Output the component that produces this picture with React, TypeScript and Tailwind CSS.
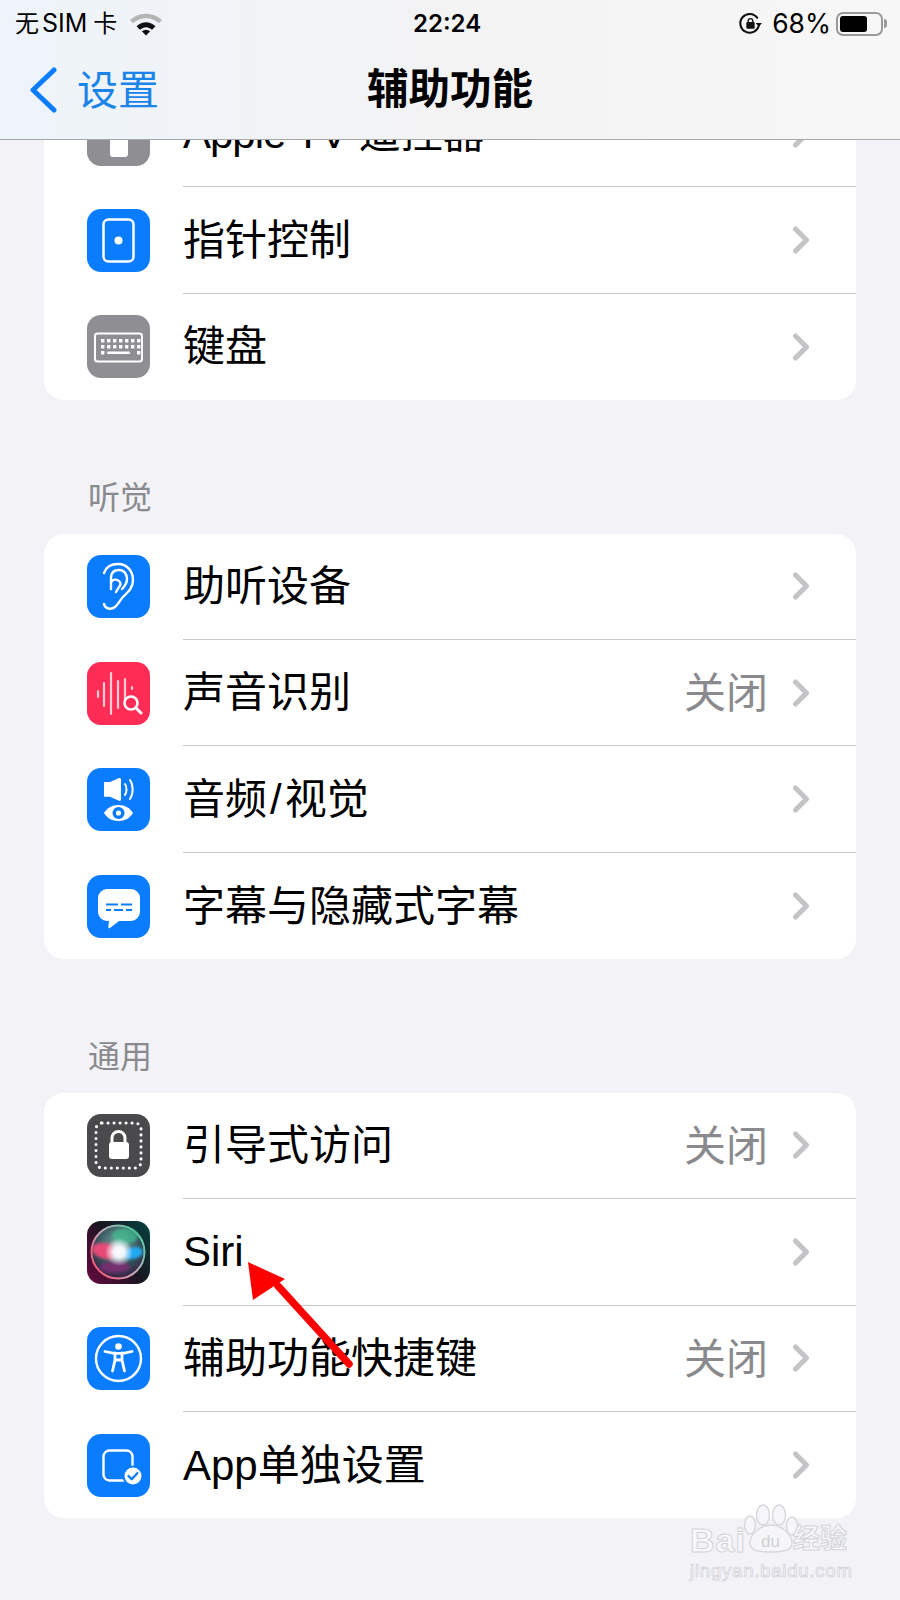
import React from "react";
import { ChevronRight } from "lucide-react";

type RowProps = {
  icon: React.ReactNode;
  bg?: string;
  label: React.ReactNode;
  value?: string;
  last?: boolean;
};

const Row = ({ icon, bg, label, value, last }: RowProps) => (
  <div className="flex h-[106.4px] items-center">
    <div className={`ml-[43px] h-[63px] w-[63px] shrink-0 overflow-hidden rounded-[14px] ${bg ?? ""}`}>
      {icon}
    </div>
    <div className={`ml-[33px] flex h-full flex-1 items-center pr-[38px] ${last ? "" : "border-b border-[#c8c8ca]"}`}>
      <span className="mt-[1px] flex-1 font-['Liberation_Sans','Noto_Sans_CJK_SC',sans-serif] text-[42px] leading-none text-black">
        {label}
      </span>
      {value && <span className="mt-[1px] mr-[11px] text-[42px] leading-none text-[#8a8a8e]">{value}</span>}
      <ChevronRight size={44} strokeWidth={2.8} className="mr-[-5px] text-[#c4c4c7]" />
    </div>
  </div>
);

const Card = ({ children }: { children: React.ReactNode }) => (
  <div className="mx-[44px] overflow-hidden rounded-[20px] bg-white">{children}</div>
);

const SectionTitle = ({ children }: { children: React.ReactNode }) => (
  <div className="ml-[88px] mt-[72.5px] h-[61px] text-[32px] leading-[50px] text-[#8a8a8e]">{children}</div>
);

const Glyph = ({ children }: { children: React.ReactNode }) => (
  <svg viewBox="0 0 63 63" className="h-full w-full" fill="none">
    {children}
  </svg>
);

const RemoteIcon = () => (
  <Glyph>
    <rect x="23" y="8" width="18" height="46" rx="3" fill="#fff" />
    <circle cx="28" cy="18" r="2" fill="#8e8e93" />
    <circle cx="36" cy="18" r="2" fill="#8e8e93" />
  </Glyph>
);

const PointerIcon = () => (
  <Glyph>
    <rect x="16.5" y="10.5" width="30" height="42" rx="5" stroke="#fff" strokeWidth="2.5" />
    <circle cx="31.5" cy="31.5" r="4" fill="#fff" />
  </Glyph>
);

const KeyboardIcon = () => {
  const dots: React.ReactNode[] = [];
  [0, 1].forEach((r) => {
    for (let c = 0; c < 7; c++) {
      dots.push(<rect key={`${r}-${c}`} x={14 + c * 6} y={24 + r * 6} width="3.4" height="3.4" rx="0.6" fill="#fff" />);
    }
  });
  return (
    <Glyph>
      <rect x="8" y="18.5" width="47" height="28" rx="2.5" stroke="#fff" strokeWidth="2" />
      {dots}
      <rect x="14" y="36" width="3.4" height="3.4" rx="0.6" fill="#fff" />
      <rect x="20" y="36.5" width="23" height="2.6" rx="1" fill="#fff" />
      <rect x="50" y="36" width="3.4" height="3.4" rx="0.6" fill="#fff" />
    </Glyph>
  );
};

const EarIcon = () => (
  <Glyph>
    <g stroke="#fff" strokeWidth="2.4" strokeLinecap="round">
      <path d="M17 49c1 5 7 6 11 3 3-2 5-7 8-10 5-5 10-9 10-17 0-9-6-16-15-16-7 0-12 3-14 9" />
      <path d="M24 34V23c0-5 3-8 8-8 5 0 8 4 8 9 0 5-3 8-5 10" />
      <path d="M24 27c2-3 6-3 8-1 2 2 2 4 0 6l-3 5" />
    </g>
  </Glyph>
);

const SoundIcon = () => (
  <Glyph>
    <g stroke="rgba(255,255,255,0.75)" strokeWidth="2.2" strokeLinecap="round">
      <path d="M11 29v6" />
      <path d="M17 21v23" />
      <path d="M24 11v41" />
      <path d="M31 19v27" />
      <path d="M38 17v23" />
      <path d="M45 25v2" />
    </g>
    <circle cx="44" cy="41" r="6.5" stroke="#fff" strokeWidth="2.6" fill="#ff2d55" />
    <path d="M49 46l5 5" stroke="#fff" strokeWidth="3" strokeLinecap="round" />
  </Glyph>
);

const AudioVisualIcon = () => (
  <Glyph>
    <path d="M17 14h6l9-4c1-.4 2 .3 2 1.4v20c0 1.1-1 1.8-2 1.4l-9-4h-6z" fill="#fff" />
    <path d="M38 16c2 3 2 8 0 11" stroke="#fff" strokeWidth="2" strokeLinecap="round" />
    <path d="M43 12c3.5 5 3.5 14 0 19" stroke="#fff" strokeWidth="2" strokeLinecap="round" />
    <path d="M17 45c3-5 8-8 14.5-8S43 40 46 45c-3 5-8 8-14.5 8S20 50 17 45z" fill="#fff" />
    <circle cx="31.5" cy="45" r="6" fill="#0a7cff" />
    <circle cx="31.5" cy="45" r="2.6" fill="#fff" />
  </Glyph>
);

const CaptionIcon = () => (
  <Glyph>
    <path d="M20 14h24a9 9 0 0 1 9 9v14a9 9 0 0 1-9 9H32l-9 7c-.8.6-1.8 0-1.7-1l.7-6h-2a9 9 0 0 1-9-9V23a9 9 0 0 1 9-9z" fill="#fff" />
    <path d="M19 29.5h12M34 29.5h11M19 35h5M27 35h9M39 35h6" stroke="#0a7cff" strokeWidth="2.2" />
  </Glyph>
);

const GuidedIcon = () => (
  <Glyph>
    <rect x="9" y="9" width="45" height="45" rx="6" stroke="#fff" strokeWidth="3" strokeDasharray="0.1 5.9" strokeLinecap="round" />
    <rect x="22" y="28" width="20" height="17" rx="3" fill="#fff" />
    <path d="M25 29v-5a6.5 6.5 0 0 1 13 0v5" stroke="#fff" strokeWidth="3" />
  </Glyph>
);

const SiriIcon = () => (
  <svg viewBox="0 0 63 63" className="h-full w-full">
    <defs>
      <linearGradient id="siriBg" x1="0" y1="0.8" x2="1" y2="0.1">
        <stop offset="0" stopColor="#5c0b3c" />
        <stop offset="0.5" stopColor="#1a1420" />
        <stop offset="1" stopColor="#06403f" />
      </linearGradient>
      <radialGradient id="siriBall" cx="0.5" cy="0.35" r="0.6">
        <stop offset="0" stopColor="#7fa5a0" />
        <stop offset="0.7" stopColor="#2f5058" />
        <stop offset="1" stopColor="#3a2a48" />
      </radialGradient>
      <linearGradient id="siriRing" x1="0" y1="0.9" x2="1" y2="0.1">
        <stop offset="0" stopColor="#ff4a70" />
        <stop offset="0.5" stopColor="#c0a8b8" />
        <stop offset="1" stopColor="#49d0a0" />
      </linearGradient>
      <radialGradient id="siriCore">
        <stop offset="0" stopColor="#fff" />
        <stop offset="0.4" stopColor="#f4fbff" stopOpacity="0.95" />
        <stop offset="1" stopColor="#fff" stopOpacity="0" />
      </radialGradient>
      <filter id="siriBlur">
        <feGaussianBlur stdDeviation="1.5" />
      </filter>
    </defs>
    <rect width="63" height="63" fill="url(#siriBg)" />
    <circle cx="31" cy="31" r="26.5" fill="url(#siriBall)" stroke="url(#siriRing)" strokeWidth="2" />
    <g filter="url(#siriBlur)">
      <ellipse cx="38" cy="15" rx="13" ry="8" fill="#40c090" opacity="0.7" />
      <ellipse cx="18" cy="30" rx="13" ry="8" fill="#f04a78" opacity="0.95" transform="rotate(12 18 30)" />
      <ellipse cx="46" cy="32" rx="10" ry="6" fill="#22a8f0" transform="rotate(-12 46 32)" />
      <ellipse cx="28" cy="46" rx="15" ry="6" fill="#8a2a78" opacity="0.75" />
    </g>
    <circle cx="32" cy="31" r="14" fill="url(#siriCore)" />
  </svg>
);

const AccessIcon = () => (
  <Glyph>
    <circle cx="31.5" cy="31.5" r="22.5" stroke="#fff" strokeWidth="2.4" />
    <circle cx="31.5" cy="19.5" r="3.3" fill="#fff" />
    <path d="M18 24.5l9 1.8h9l9-1.8" stroke="#fff" strokeWidth="2.8" strokeLinecap="round" strokeLinejoin="round" />
    <path d="M28 26v7l-2.5 11M35 26v7l2.5 11M28 33h7" stroke="#fff" strokeWidth="2.8" strokeLinecap="round" />
  </Glyph>
);

const AppSettingsIcon = () => (
  <Glyph>
    <rect x="16.5" y="16.5" width="29" height="30" rx="6" stroke="#fff" strokeWidth="2.4" />
    <circle cx="46" cy="42" r="9.5" fill="#fff" stroke="#0a7cff" strokeWidth="2" />
    <path d="M41.5 42l3.2 3.2 5.6-6" stroke="#0a7cff" strokeWidth="2.4" strokeLinecap="round" strokeLinejoin="round" fill="none" />
  </Glyph>
);

const StatusBar = () => (
  <div className="relative flex h-[47px] items-center justify-between pl-[15px] pr-[13px] text-[24px] leading-none text-black">
    <div className="flex items-center">
      <span>无</span>
      <span className="ml-[3px] text-[25px]">SIM</span>
      <span className="ml-[6px]">卡</span>
      <svg viewBox="0 0 34 24" className="ml-[12px] h-[25px] w-[34px]">
        <path d="M1 8.5C10 0 24 0 33 8.5l-3 3.3C22.5 5 11.5 5 4 11.8z" fill="#b4b4b4" />
        <path d="M7.5 14.8c6-5.4 13-5.4 19 0l-3.5 3.4c-4-3.4-8-3.4-12 0z" fill="#111" />
        <path d="M12.8 19.8c2.8-2.2 5.6-2.2 8.4 0L17 24z" fill="#111" />
      </svg>
    </div>
    <span className="absolute left-[413px] font-semibold">22:24</span>
    <div className="flex items-center">
      <svg viewBox="0 0 24 24" className="mr-[9px] h-[25px] w-[25px]" fill="none">
        <path d="M20 14a9 9 0 1 1-1.5-7.5" stroke="#111" strokeWidth="2" strokeLinecap="round" />
        <path d="M23 11.5h-6l3 3.500z" fill="#111" />
        <rect x="8" y="10.5" width="8" height="6.5" rx="1" fill="#111" />
        <path d="M9.8 11V9.5a2.2 2.2 0 0 1 4.400 0V11" stroke="#111" strokeWidth="1.3" />
      </svg>
      <span className="mr-[5px] text-[26.5px]">68%</span>
      <div className="flex h-[24px] w-[47px] items-center rounded-[7px] border-2 border-[#9a9a9a] p-[2px]">
        <div className="h-full w-[27px] rounded-[3px] bg-black" />
      </div>
      <div className="ml-[1px] h-[9px] w-[3px] rounded-r-full bg-[#9a9a9a]" />
    </div>
  </div>
);

const NavBar = () => (
  <div className="relative flex h-[91px] items-center justify-center pb-[5px]">
    <div className="absolute left-[29px] flex items-center text-[#1a84e8]">
      <svg viewBox="0 0 28 46" className="h-[46px] w-[28px]" fill="none">
        <path d="M25 3L4 23l21 20" stroke="#0a7cff" strokeWidth="5" strokeLinecap="round" strokeLinejoin="round" />
      </svg>
      <span className="ml-[20px] text-[41px] leading-none">设置</span>
    </div>
    <span className="text-[41.5px] font-bold leading-none text-black">辅助功能</span>
  </div>
);

const RedArrow = () => (
  <svg viewBox="0 0 110 110" className="absolute left-[245px] top-[1259px] h-[110px] w-[110px]">
    <path d="M104 105L33 27" stroke="#fe0000" strokeWidth="7.5" strokeLinecap="round" />
    <path d="M3 3l37 17-32 21z" fill="#fe0000" />
  </svg>
);

const Watermark = () => (
  <div className="absolute left-[690px] top-[1502px] h-[80px] w-[170px] font-['Liberation_Sans','Noto_Sans_CJK_SC',sans-serif]">
    <svg viewBox="0 0 170 80" className="absolute inset-0" fill="none" stroke="#d6d6da" strokeWidth="1.3">
      <ellipse cx="73" cy="13" rx="6.5" ry="10" fill="#f6f6f9" />
      <ellipse cx="89" cy="13" rx="6.5" ry="10" fill="#f6f6f9" />
      <ellipse cx="60" cy="23" rx="5.5" ry="9" fill="#f6f6f9" />
      <ellipse cx="102" cy="24" rx="5.5" ry="9" fill="#f6f6f9" />
      <path d="M60 41c0-9 11-18 21-18s21 9 21 18c0 7-7 9-21 9s-21-2-21-9z" fill="#f6f6f9" />
    </svg>
    <span className="absolute left-[0px] top-[21px] text-[34px] font-bold leading-none tracking-[1px] text-[#f8f8fa] [-webkit-text-stroke:1px_#d4d4d8]">
      Bai
    </span>
    <span className="absolute left-[71px] top-[31px] text-[17px] leading-none text-[#cfcfd4]">du</span>
    <span className="absolute left-[103px] top-[24px] text-[27px] font-bold leading-none text-[#f8f8fa] [-webkit-text-stroke:1px_#d4d4d8]">
      经验
    </span>
    <span className="absolute left-[0px] top-[60px] text-[18.5px] leading-none tracking-[0.8px] text-[#f8f8fa] [-webkit-text-stroke:0.7px_#d0d0d5]">
      jingyan.baidu.com
    </span>
  </div>
);

export default function App() {
  return (
    <div className="relative h-[1600px] w-[900px] overflow-hidden bg-[#f2f2f7] font-['Inter','Noto_Sans_CJK_SC',sans-serif]">
      <header className="relative z-10 h-[140px] border-b border-[#a8a8aa] bg-gradient-to-r from-[#eef4fa] via-[#f3f3f4] to-[#f7f7f7]">
        <StatusBar />
        <NavBar />
      </header>

      <main className="-mt-[60px]">
        <Card>
          <div className="h-[1px]" />
          <Row
            icon={<RemoteIcon />}
            bg="bg-[#8e8e93]"
            label={
              <>
                <span className="tracking-[-1px]">Apple TV</span> 遥控器
              </>
            }
          />
          <Row icon={<PointerIcon />} bg="bg-[#0a7cff]" label="指针控制" />
          <Row icon={<KeyboardIcon />} bg="bg-[#8e8e93]" label="键盘" last />
        </Card>

        <SectionTitle>听觉</SectionTitle>
        <Card>
          <Row icon={<EarIcon />} bg="bg-[#0a7cff]" label="助听设备" />
          <Row icon={<SoundIcon />} bg="bg-[#ff2d55]" label="声音识别" value="关闭" />
          <Row
            icon={<AudioVisualIcon />}
            bg="bg-[#0a7cff]"
            label={
              <>
                音频<span className="mx-[3px]">/</span>视觉
              </>
            }
          />
          <Row icon={<CaptionIcon />} bg="bg-[#0a7cff]" label="字幕与隐藏式字幕" last />
        </Card>

        <SectionTitle>通用</SectionTitle>
        <Card>
          <Row icon={<GuidedIcon />} bg="bg-[#4a4a4c]" label="引导式访问" value="关闭" />
          <Row icon={<SiriIcon />} label="Siri" />
          <Row icon={<AccessIcon />} bg="bg-[#0a7cff]" label="辅助功能快捷键" value="关闭" />
          <Row icon={<AppSettingsIcon />} bg="bg-[#0a7cff]" label="App单独设置" last />
        </Card>
      </main>

      <RedArrow />
      <Watermark />
    </div>
  );
}
